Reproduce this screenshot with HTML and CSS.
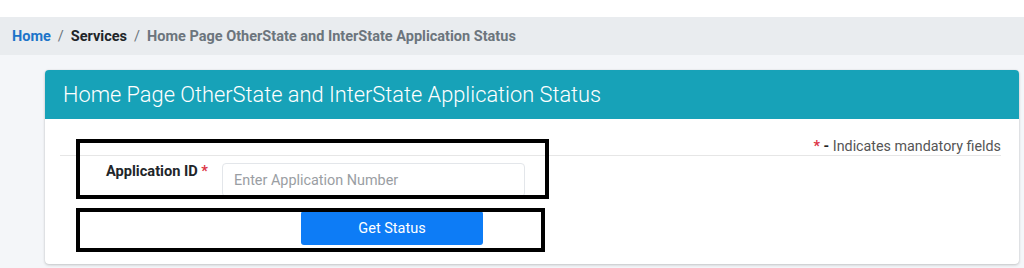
FILE: index.html
```html
<!DOCTYPE html>
<html lang="en">
<head>
<meta charset="utf-8">
<title>Application Status</title>
<link rel="stylesheet" href="styles.css">
</head>
<body>
<div class="topbar"></div>
<nav class="breadcrumb">
  <a class="crumb-home" href="#">Home</a>
  <span class="sep">/</span>
  <span class="crumb-mid">Services</span>
  <span class="sep">/</span>
  <span class="crumb-cur">Home Page OtherState and InterState Application Status</span>
</nav>
<main class="content">
  <section class="card">
    <header class="card-header">Home Page OtherState and InterState Application Status</header>
    <div class="card-body">
      <div class="mandatory"><span class="req">*</span> <b>-</b> Indicates mandatory fields</div>
      <div class="form-row">
        <label class="form-label" for="appid">Application ID <span class="req">*</span></label>
        <input class="form-input" id="appid" type="text" placeholder="Enter Application Number">
      </div>
      <div class="btn-row">
        <button class="btn" type="button">Get Status</button>
      </div>
      <div class="mark mark-1"></div>
      <div class="mark mark-2"></div>
    </div>
  </section>
</main>
</body>
</html>
```

FILE: styles.css
```css
* { box-sizing: border-box; }
html, body { margin: 0; padding: 0; }
body {
  width: 1024px;
  height: 268px;
  overflow: hidden;
  background: #f4f6f9;
  font-family: Roboto, "Liberation Sans", Arial, sans-serif;
  color: #212529;
}
.topbar { height: 17px; background: #ffffff; }
.breadcrumb {
  height: 38px;
  background: #e9ecef;
  display: flex;
  align-items: center;
  padding-left: 12px;
  font-size: 14.5px;
  font-weight: 700;
}
.crumb-home { color: #1c74c9; text-decoration: none; }
.sep { color: #6c757d; font-weight: 400; margin: 0 7px; }
.crumb-mid { color: #212529; }
.crumb-cur { color: #6c757d; }
.content { padding: 15px 5px 0 45px; }
.card {
  background: #ffffff;
  border-radius: 4px;
  box-shadow: 0 0 1px rgba(0,0,0,.13), 0 1px 3px rgba(0,0,0,.2);
}
.card-header {
  height: 49px;
  background: #17a2b8;
  color: #ffffff;
  font-size: 21.8px;
  font-weight: 300;
  display: flex;
  align-items: center;
  padding-left: 18px;
  border-radius: 4px 4px 0 0;
}
.card-body {
  position: relative;
  height: 145px;
  padding: 0 18px 0 15px;
}
.mandatory {
  height: 37px;
  padding-top: 18px;
  border-bottom: 1px solid #e6e6e6;
  text-align: right;
  font-size: 14.3px;
  line-height: 19px;
  color: #555;
}
.mandatory b { color: #222; }
.req { color: #dc3545; font-weight: 700; }
.form-row {
  display: flex;
  align-items: flex-start;
  margin-top: 7px;
  padding-left: 46px;
}
.form-label {
  width: 116px;
  font-size: 14.6px;
  font-weight: 700;
  color: #212529;
  padding-top: 0;
  line-height: 16px;
}
.form-input {
  width: 303px;
  height: 34px;
  margin-top: 0;
  border: 1px solid #e3e6ea;
  border-radius: 4px;
  padding: 0 11px;
  font-family: inherit;
  font-size: 14.4px;
  color: #495057;
  background: #fff;
}
.form-input::placeholder { color: #9a9ea3; }
.btn-row {
  margin-top: 14px;
  padding-left: 241px;
}
.btn {
  width: 182px;
  height: 34px;
  border: 0;
  border-radius: 3px;
  background: #0d7cf6;
  color: #ffffff;
  font-family: inherit;
  font-size: 14.5px;
  padding: 0;
}
.mark {
  position: absolute;
  border: 4px solid #000;
  pointer-events: none;
}
.mark-1 { left: 31px; top: 20px; width: 473px; height: 60px; }
.mark-2 { left: 31px; top: 89px; width: 469px; height: 44px; }
```
